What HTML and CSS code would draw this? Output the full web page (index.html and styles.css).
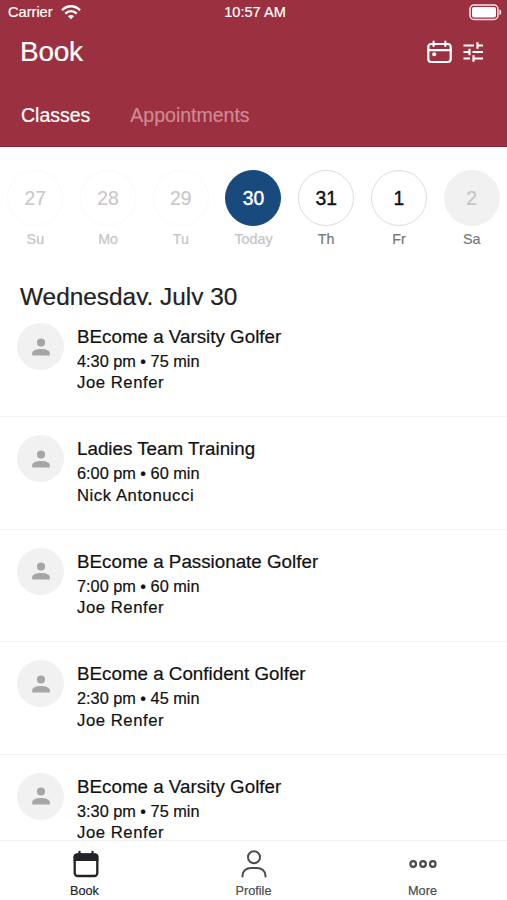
FILE: index.html
```html
<!DOCTYPE html>
<html lang="en">
<head>
    <meta charset="UTF-8">
    <meta name="viewport" content="width=device-width, initial-scale=1.0">
    <title>Book</title>
    <link rel="stylesheet" href="styles.css">
</head>
<body>
    <svg class="sprite" width="0" height="0">
        <symbol id="person" viewBox="0 0 18 18">
            <circle cx="9" cy="4.5" r="4.1"/>
            <path d="M0.2 17.5v-2.2C0.2 12.3 5 11 9 11s8.8 1.3 8.8 4.3v2.2z"/>
        </symbol>
    </svg>

    <header class="header">
        <div class="status-bar">
            <div class="carrier">
                <span>Carrier</span>
                <svg width="20" height="15" viewBox="0 0 20 15" fill="none" stroke="#fff" stroke-width="2.3">
                    <path d="M1 5.2C6-0.1 14-0.1 19 5.2"/>
                    <path d="M4.3 8.6C7.5 5.3 12.5 5.3 15.7 8.6"/>
                    <path d="M10 14.3L6.9 11.3C8.6 9.6 11.4 9.6 13.1 11.3z" fill="#fff" stroke="none"/>
                </svg>
            </div>
            <span class="time">10:57 AM</span>
            <svg class="battery" width="33" height="17" viewBox="0 0 33 17">
                <rect x="1" y="1" width="28" height="14.5" rx="4" fill="none" stroke="#fbe4e8" stroke-width="1.5"/>
                <rect x="3" y="3" width="24" height="10.5" rx="2" fill="#fff"/>
                <path d="M30.5 5.5c2.3 0.8 2.3 4.7 0 5.5z" fill="#fff"/>
            </svg>
        </div>
        <div class="title-bar">
            <h1>Book</h1>
            <div class="actions">
                <svg width="25" height="24" viewBox="0 0 25 24" fill="none" stroke="#fff" stroke-width="2.2" stroke-linecap="round">
                    <rect x="1.3" y="4" width="22.4" height="18" rx="3"/>
                    <path d="M1.3 10.2h22.4M6.6 1.7v4.2M18.4 1.7v4.2"/>
                    <circle cx="7.2" cy="14.3" r="2" fill="#fff" stroke="none"/>
                </svg>
                <svg width="21" height="20" viewBox="0 0 21 20" fill="none" stroke="#fff" stroke-width="2.2">
                    <path d="M0.5 3.5h10.5M14.5 3.5h5.5M14.5 0.3v6.4"/>
                    <path d="M0.5 10h5.5M6.5 6.8v6.4M9.5 10h10.5"/>
                    <path d="M0.5 16.5h6.5M10.5 16.5h9.5M10.5 13.3v6.4"/>
                </svg>
            </div>
        </div>
        <nav class="tabs">
            <a class="active">Classes</a>
            <a>Appointments</a>
        </nav>
    </header>

    <div class="week">
        <div class="day past"><span class="date">27</span><span class="label">Su</span></div>
        <div class="day past"><span class="date">28</span><span class="label">Mo</span></div>
        <div class="day past"><span class="date">29</span><span class="label">Tu</span></div>
        <div class="day today"><span class="date">30</span><span class="label">Today</span></div>
        <div class="day"><span class="date">31</span><span class="label">Th</span></div>
        <div class="day"><span class="date">1</span><span class="label">Fr</span></div>
        <div class="day empty"><span class="date">2</span><span class="label">Sa</span></div>
    </div>

    <main class="schedule">
        <h2>Wednesday, July 30</h2>
        <div class="class-row">
            <div class="avatar"><svg><use href="#person"/></svg></div>
            <div class="info">
                <h3>BEcome a Varsity Golfer</h3>
                <p>4:30 pm • 75 min</p>
                <p class="coach">Joe Renfer</p>
            </div>
        </div>
        <div class="class-row">
            <div class="avatar"><svg><use href="#person"/></svg></div>
            <div class="info">
                <h3>Ladies Team Training</h3>
                <p>6:00 pm • 60 min</p>
                <p class="coach">Nick Antonucci</p>
            </div>
        </div>
        <div class="class-row">
            <div class="avatar"><svg><use href="#person"/></svg></div>
            <div class="info">
                <h3>BEcome a Passionate Golfer</h3>
                <p>7:00 pm • 60 min</p>
                <p class="coach">Joe Renfer</p>
            </div>
        </div>
        <div class="class-row">
            <div class="avatar"><svg><use href="#person"/></svg></div>
            <div class="info">
                <h3>BEcome a Confident Golfer</h3>
                <p>2:30 pm • 45 min</p>
                <p class="coach">Joe Renfer</p>
            </div>
        </div>
        <div class="class-row">
            <div class="avatar"><svg><use href="#person"/></svg></div>
            <div class="info">
                <h3>BEcome a Varsity Golfer</h3>
                <p>3:30 pm • 75 min</p>
                <p class="coach">Joe Renfer</p>
            </div>
        </div>
    </main>

    <nav class="bottom-nav">
        <a class="active">
            <svg class="book-icon" width="26" height="28" viewBox="0 0 26 28">
                <rect x="1.7" y="4.5" width="22.6" height="21.5" rx="3" fill="none" stroke="#222328" stroke-width="2.3"/>
                <path d="M0.6 11V6.500q0-3 3-3h18.800q3 0 3 3V11z" fill="#222328"/>
                <path d="M6.500 2v3M19.500 2v3" stroke="#222328" stroke-width="2.3" stroke-linecap="round"/>
            </svg>
            <span>Book</span>
        </a>
        <a>
            <svg width="26" height="28" viewBox="0 0 26 28" fill="none" stroke="#4b4c50" stroke-width="2">
                <circle cx="13" cy="7.2" r="6"/>
                <path d="M1.5 27.3v-1.5c0-4.8 4-7.8 8.5-7.8h6c4.5 0 8.5 3 8.5 7.8v1.5"/>
            </svg>
            <span>Profile</span>
        </a>
        <a>
            <svg width="28" height="28" viewBox="0 0 28 28" fill="none" stroke="#4b4c50" stroke-width="2.2">
                <circle cx="4.2" cy="14" r="2.8"/>
                <circle cx="14" cy="14" r="2.8"/>
                <circle cx="23.8" cy="14" r="2.8"/>
            </svg>
            <span>More</span>
        </a>
    </nav>
</body>
</html>
```
FILE: styles.css
```css
* {
    box-sizing: border-box;
}

body {
    margin: 0;
    height: 900px;
    display: flex;
    flex-direction: column;
    overflow: hidden;
    font-family: "Liberation Sans", Arial, sans-serif;
    background-color: #fff;
    color: #111;
    -webkit-text-stroke: 0.2px;
}

h1, h2, h3, p {
    margin: 0;
    font-weight: normal;
}

svg {
    display: block;
}

.sprite {
    display: none;
}

.header {
    height: 147px;
    flex: none;
    background-color: #9b3040;
    border-bottom: 1px solid #86243a;
    color: #fff;
}

.status-bar {
    display: grid;
    grid-template-columns: 1fr auto 1fr;
    align-items: center;
    height: 24px;
    padding: 0 5px 0 8px;
    font-size: 14.6px;
}

.carrier {
    display: flex;
    align-items: center;
    gap: 8px;
}

.battery {
    justify-self: end;
}

.title-bar {
    display: flex;
    justify-content: space-between;
    align-items: center;
    height: 55px;
    padding: 0 23px 0 20px;
}

.title-bar h1 {
    font-size: 28px;
    letter-spacing: -0.3px;
}

.actions {
    display: flex;
    align-items: center;
    gap: 11px;
}

.tabs {
    display: flex;
    gap: 40px;
    padding: 24px 21px 0;
    font-size: 19.5px;
    line-height: 24px;
}

.tabs a {
    color: #cf8993;
}

.tabs .active {
    color: #fff;
}

/* week strip */
.week {
    display: grid;
    grid-template-columns: repeat(7, 1fr);
    flex: none;
    height: 135px;
    margin: 0 -1px;
    padding-top: 23px;
}

.day {
    display: flex;
    flex-direction: column;
    align-items: center;
    gap: 5px;
}

.date {
    display: flex;
    align-items: center;
    justify-content: center;
    width: 56px;
    height: 56px;
    padding-top: 1px;
    border: 1px solid #dcdcdc;
    border-radius: 50%;
    font-size: 19.3px;
    -webkit-text-stroke: 0.4px;
}

.label {
    font-size: 14.3px;
    line-height: 16px;
    color: #77777a;
}

.past .date {
    border-color: #fafafa;
    color: #c9c9c9;
    -webkit-text-stroke: 0.2px;
}

.past .label,
.today .label {
    color: #c4c4c6;
}

.today .date {
    background-color: #184a7e;
    border-color: #184a7e;
    color: #fff;
}

.empty .date {
    background-color: #f1f1f1;
    border-color: #f1f1f1;
    color: #c4c4c4;
    -webkit-text-stroke: 0.2px;
}

.schedule {
    flex: 1;
    min-height: 0;
    overflow: hidden;
}

.schedule h2 {
    height: 23px;
    padding-left: 20px;
    overflow: hidden;
    font-size: 24.4px;
    line-height: 29px;
    color: #222;
}

.class-row {
    display: flex;
    gap: 13px;
    height: 112.4px;
    padding: 18px 17px 0;
    border-bottom: 1px solid #f4f4f4;
}

.avatar {
    display: flex;
    align-items: center;
    justify-content: center;
    flex: none;
    width: 47px;
    height: 47px;
    border-radius: 50%;
    background-color: #f1f1f1;
}

.avatar svg {
    width: 18px;
    height: 18px;
    fill: #a6a6a6;
}

.info h3 {
    padding-top: 1px;
    font-size: 18.8px;
    line-height: 26px;
}

.info p {
    font-size: 16.3px;
    line-height: 22.4px;
}

.info .coach {
    font-size: 16.7px;
    letter-spacing: 0.55px;
}

.bottom-nav {
    display: grid;
    grid-template-columns: repeat(3, 1fr);
    flex: none;
    height: 60px;
    padding-top: 9px;
    border-top: 1px solid #f2f2f2;
    font-size: 12.7px;
    color: #4b4c50;
}

.bottom-nav a {
    display: flex;
    flex-direction: column;
    align-items: center;
    gap: 6px;
}

.bottom-nav .book-icon {
    margin-left: 3px;
}

.bottom-nav .active {
    color: #222328;
}
```
